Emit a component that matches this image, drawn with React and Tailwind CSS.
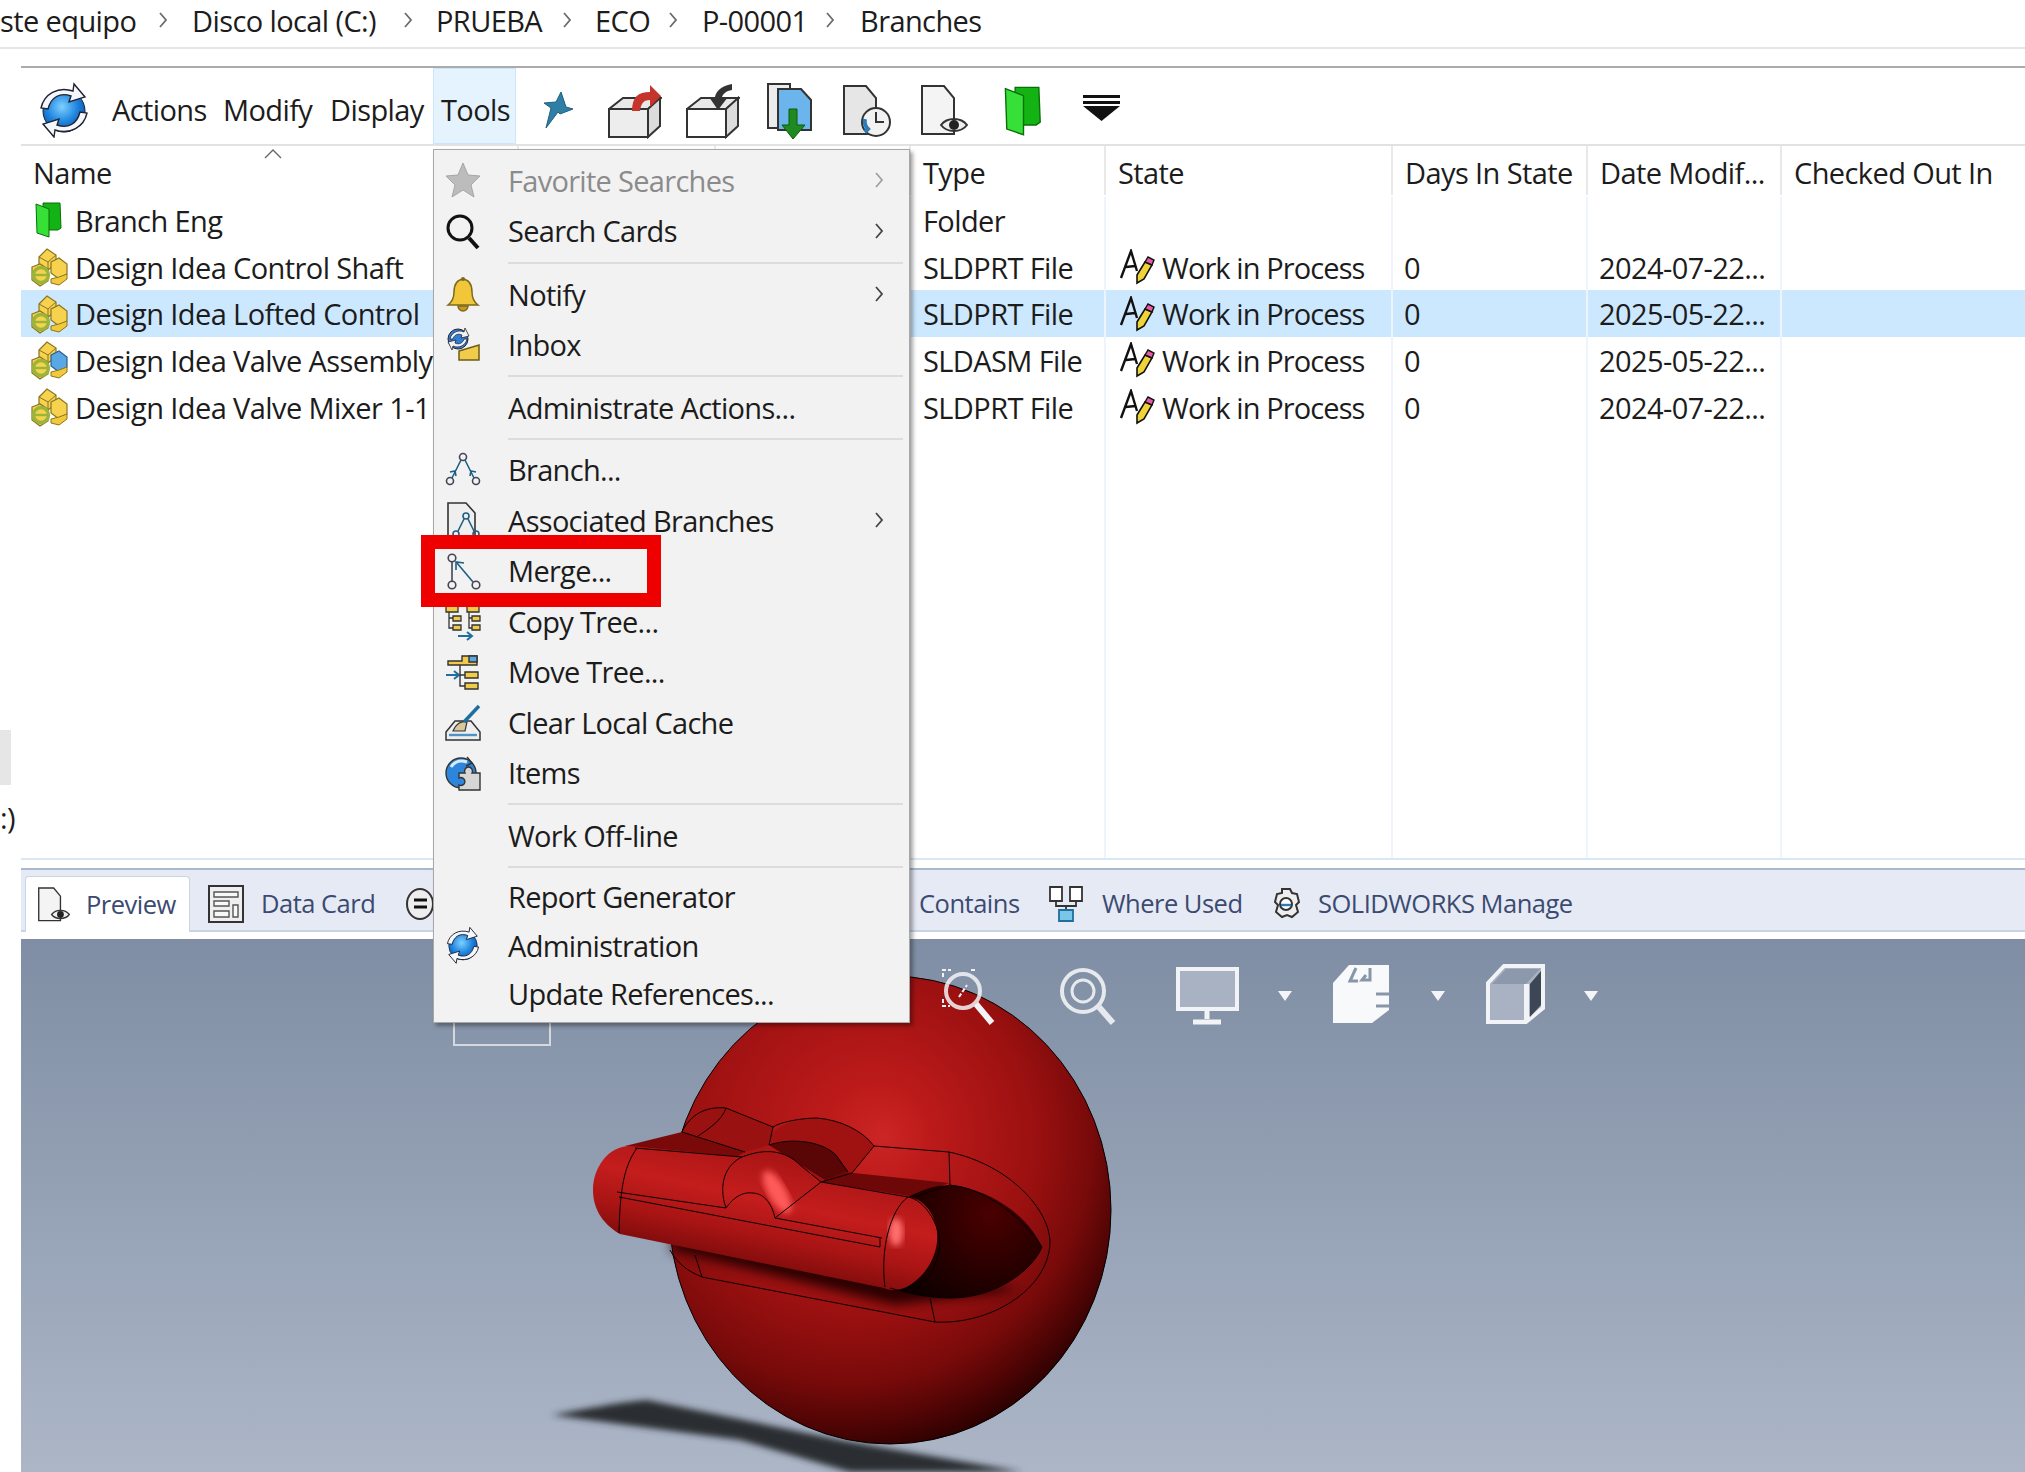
import React from "react";

// small hand drawn icons, sizes are passed in so they can be reused
function Chevron({ className = "", color = "#6b6b6b" }) {
  return (
    <svg width="10" height="18" viewBox="0 0 10 18" className={className}>
      <path d="M2 2l6 7-6 7" fill="none" stroke={color} strokeWidth="1.8" />
    </svg>
  );
}

function SyncLogo({ size = 56, id = "a" }) {
  return (
    <svg width={size} height={size} viewBox="0 0 56 56">
      <defs>
        <radialGradient id={`sync-${id}`} cx="0.45" cy="0.4" r="0.65">
          <stop offset="0" stopColor="#7fd0ff" />
          <stop offset="0.55" stopColor="#1f86e0" />
          <stop offset="1" stopColor="#0c4aa0" />
        </radialGradient>
      </defs>
      <circle cx="28" cy="29" r="21" fill={`url(#sync-${id})`} stroke="#123" strokeWidth="1" />
      <path d="M5 26C8 12 22 4 37 9l1-7 11 13-16 5 2-6C24 10 15 15 12 27z" fill="#f4f7fb" stroke="#223" strokeWidth="1.4" />
      <path d="M51 31C48 45 34 53 19 48l-1 7-11-13 16-5-2 6c11 4 20-1 23-13z" fill="#f4f7fb" stroke="#223" strokeWidth="1.4" />
    </svg>
  );
}

function PartIcon({ blue = false }) {
  return (
    <svg width="40" height="40" viewBox="0 0 40 40" className="shrink-0">
      <path d="M10 10l8-8 9 6v9l-8 6-9-6z" fill="#f6d24e" stroke="#8a7420" strokeWidth="1.2" />
      <path d="M10 10l9 5 8-7M19 15v8" fill="none" stroke="#8a7420" strokeWidth="1" />
      <path d="M22 15l8-4 8 6v10l-8 5-8-6z" fill={blue ? "#5aa7e6" : "#f6d24e"} stroke={blue ? "#2a5f90" : "#8a7420"} strokeWidth="1.2" />
      <path d="M3 20l8-3 8 5v12l-8 5-8-6z" fill="#f6d24e" stroke="#8a7420" strokeWidth="1.2" />
      <path d="M22 32l8-2 8-3v5l-8 6-8-2z" fill="#f2c93a" stroke="#8a7420" strokeWidth="1" />
      <circle cx="12" cy="28" r="7.5" fill="none" stroke="#9ab53a" strokeWidth="3.4" />
      <path d="M6 28h12" stroke="#9ab53a" strokeWidth="2.4" />
    </svg>
  );
}

function GreenFolder({ w = 28, h = 36 }) {
  return (
    <svg width={w} height={h} viewBox="0 0 28 36" className="shrink-0">
      <path d="M8 1h17l1 25-3 2H8z" fill="#12b312" stroke="#0a6e0a" strokeWidth="1" />
      <path d="M1 2l13 5v28L2 31z" fill="#37e037" stroke="#0a6e0a" strokeWidth="1" />
    </svg>
  );
}

function StateIcon() {
  return (
    <svg width="36" height="36" viewBox="0 0 36 36" className="shrink-0">
      <path d="M2 29L12 2l6 20M7 18l9-1" fill="none" stroke="#111" strokeWidth="2.4" />
      <path d="M18 26l8-13 7 3-8 14-7 4z" fill="#f0d437" stroke="#111" strokeWidth="1.6" />
      <path d="M26 13l3-5 6 3-2 5z" fill="#e85aa8" stroke="#111" strokeWidth="1.4" />
    </svg>
  );
}

function DocShape({ fill = "#f1f1f1" }) {
  return <path d="M4 3h22l10 12v36H4z" fill={fill} stroke="#333" strokeWidth="2" />;
}

function Pin() {
  return (
    <svg width="38" height="38" viewBox="0 0 38 38">
      <path d="M25 1l5 15 7 2-13 5-2-2-12 16 5-20-7-5 12-1z" fill="#2e7ea6" stroke="#1f5f82" strokeWidth="1" />
    </svg>
  );
}

function BoxArrow({ down = false }) {
  return (
    <svg width="54" height="56" viewBox="0 0 54 56">
      <path d="M1 26l14-11h38v0L40 26z" fill="#e8e8e8" stroke="#333" strokeWidth="2" />
      <path d="M1 26h39v28H1z" fill={down ? "#fff" : "#ededed"} stroke="#333" strokeWidth="2" />
      <path d="M40 26l12-11v28L40 54z" fill="#dcdcdc" stroke="#333" strokeWidth="2" />
      {down ? (
        <path d="M46 1C34 3 30 9 29 14h-6l9 13 10-13h-6c1-3 4-6 10-7z" fill="#333" />
      ) : (
        <path d="M24 28c0-14 6-19 18-19V2l11 11-11 11v-7c-6 0-9 3-10 11z" fill="#c5352b" />
      )}
    </svg>
  );
}

function DocDown() {
  return (
    <svg width="46" height="57" viewBox="0 0 46 57">
      <path d="M1 1h22v44H1z" fill="#ececec" stroke="#333" strokeWidth="2" />
      <path d="M11 6h23l10 11v30H11z" fill="#6cb4ec" stroke="#333" strokeWidth="2" />
      <path d="M22 26h8v16h8L26 56 15 42h7z" fill="#1f8a1f" stroke="#0d5a0d" strokeWidth="1" />
    </svg>
  );
}

function DocClock() {
  return (
    <svg width="52" height="56" viewBox="0 0 52 56">
      <DocShape fill="#e6e6e6" />
      <circle cx="36" cy="39" r="14" fill="#f2f2f2" stroke="#333" strokeWidth="2" />
      <path d="M36 29v10h8" fill="none" stroke="#333" strokeWidth="2" />
      <path d="M25 36a11 11 0 0 0 3 10l-3 3" fill="none" stroke="#2a7db8" strokeWidth="4" />
    </svg>
  );
}

function DocEye({ w = 53, h = 56 }) {
  return (
    <svg width={w} height={h} viewBox="0 0 53 56">
      <DocShape fill="#f4f4f4" />
      <path d="M23 42c6-8 20-8 26 0-6 8-20 8-26 0z" fill="#eee" stroke="#333" strokeWidth="2" />
      <circle cx="36" cy="42" r="5" fill="#222" />
    </svg>
  );
}

function Funnel() {
  return (
    <svg width="37" height="26" viewBox="0 0 37 26">
      <path d="M0 0h37v3H0zM0 6h37v3H0z" fill="#111" />
      <path d="M0 11h37L18.5 26z" fill="#111" />
    </svg>
  );
}

// menu icons, all on a 36 box
const menuIcons = {
  star: (
    <path d="M18 1l5 12 12 1-9 9 3 12-11-7-11 7 3-12-9-9 12-1z" fill="#bcbcbc" stroke="#a6a6a6" />
  ),
  search: (
    <g fill="none" stroke="#111">
      <circle cx="15" cy="15" r="12" strokeWidth="3" />
      <path d="M24 25l9 10" strokeWidth="4" />
    </g>
  ),
  bell: (
    <g>
      <path d="M18 3c-7 1-9 7-9 13 0 6-2 10-6 13h30c-4-3-6-7-6-13 0-6-2-12-9-13z" fill="#f2c63a" stroke="#7d6a1c" strokeWidth="1.5" />
      <path d="M13 30a5 5 0 0 0 10 0z" fill="#c79a1e" stroke="#7d6a1c" strokeWidth="1.5" />
      <circle cx="18" cy="3" r="2" fill="#7d6a1c" />
    </g>
  ),
  inbox: (
    <g>
      <path d="M14 24l20-6v15H14z" fill="#f0cc4a" stroke="#6e5c1a" strokeWidth="1.5" />
      <circle cx="13" cy="12" r="10" fill="#2d7fd6" stroke="#223" />
      <path d="M5 12c1-6 8-10 14-7l1-4 4 8-8 2 1-3c-4-2-8 0-9 4zM22 12c-1 6-8 10-14 7l-1 4-4-8 8-2-1 3c4 2 8 0 9-4z" fill="#f2f2f2" stroke="#223" strokeWidth="0.8" />
    </g>
  ),
  branch: (
    <g fill="none" stroke="#445" strokeWidth="1.6">
      <circle cx="18" cy="5" r="3.5" />
      <circle cx="5" cy="29" r="3.5" />
      <circle cx="31" cy="29" r="3.5" />
      <path d="M16 8L7 26M20 8l9 18" stroke="#1f5f82" />
      <path d="M5 20l5-1 1 5M31 20l-5-1-1 5" stroke="#1f5f82" />
    </g>
  ),
  assoc: (
    <g>
      <path d="M3 1h18l9 10v25H3z" fill="#efefef" stroke="#333" strokeWidth="1.6" />
      <g fill="none" stroke="#1f5f82" strokeWidth="1.6">
        <circle cx="21" cy="14" r="3" />
        <circle cx="11" cy="32" r="3" />
        <circle cx="31" cy="32" r="3" />
        <path d="M19 17l-6 12M23 17l6 12" />
      </g>
    </g>
  ),
  merge: (
    <g fill="none" stroke="#445" strokeWidth="1.6">
      <circle cx="7" cy="5" r="3.8" />
      <circle cx="7" cy="32" r="3.8" />
      <circle cx="31" cy="32" r="3.8" />
      <path d="M7 9v19" />
      <path d="M28 29L12 10" stroke="#1f5f82" />
      <path d="M11 17l0-8 8 1" stroke="#1f5f82" />
    </g>
  ),
  copy: (
    <g stroke="#333" strokeWidth="1.3" fill="#f0cc4a">
      <path d="M1 3h12v6H1zM8 13h8v5H8zM8 22h8v5H8zM22 3h12v6H22zM27 13h8v5h-8zM27 22h8v5h-8z" />
      <path d="M4 9v16h4M4 15h4M24 9v16h3M24 15h3" fill="none" />
      <path d="M13 33h14m-5-4l5 4-5 4" fill="none" stroke="#1f6f9e" strokeWidth="2" />
    </g>
  ),
  move: (
    <g stroke="#333" strokeWidth="1.4" fill="#f0cc4a">
      <path d="M3 7h14V2h15v9H3z" />
      <path d="M24 2h8v6h-8z" fill="#5aa7e6" />
      <path d="M20 18h13v6H20zM20 29h13v6H20z" />
      <path d="M1 21h12m-4-4l5 4-5 4" fill="none" stroke="#1f6f9e" strokeWidth="2" />
      <path d="M15 11v21h5M15 21h5" fill="none" />
    </g>
  ),
  clear: (
    <g>
      <path d="M1 28l9-11h16l9 11v8H1z" fill="#eee" stroke="#333" strokeWidth="1.5" />
      <path d="M4 31h28" stroke="#4f93c4" strokeWidth="2.4" />
      <path d="M8 27c2-6 8-11 14-9l-2 9z" fill="#d9c79a" stroke="#333" strokeWidth="1.2" />
      <path d="M19 18L34 2" stroke="#1f6f9e" strokeWidth="3.4" />
    </g>
  ),
  items: (
    <g>
      <circle cx="16" cy="18" r="15" fill="#2e86dc" stroke="#333" strokeWidth="1.4" />
      <path d="M6 12c4-6 10-7 16-5" fill="none" stroke="#d8ecff" strokeWidth="3" />
      <path d="M14 18h6a4 4 0 1 1 7 0h8v17H14v-5a4 4 0 1 0 0-7z" fill="#d6d6d6" stroke="#333" strokeWidth="1.4" />
      <path d="M22 2l5 6-6 3" fill="none" stroke="#333" strokeWidth="1.4" />
    </g>
  ),
};

function MenuIcon({ name }) {
  if (name === "admin") return <SyncLogo size={38} id="admin" />;
  return (
    <svg width="36" height="36" viewBox="0 0 36 36" overflow="visible">
      {menuIcons[name]}
    </svg>
  );
}

const menuEntries = [
  { label: "Favorite Searches", icon: "star", arrow: true, disabled: true },
  { label: "Search Cards", icon: "search", arrow: true },
  { sep: "h-[13px]" },
  { label: "Notify", icon: "bell", arrow: true },
  { label: "Inbox", icon: "inbox" },
  { sep: "h-[12px]" },
  { label: "Administrate Actions..." },
  { sep: "h-[12px]" },
  { label: "Branch...", icon: "branch" },
  { label: "Associated Branches", icon: "assoc", arrow: true },
  { label: "Merge...", icon: "merge" },
  { label: "Copy Tree...", icon: "copy" },
  { label: "Move Tree...", icon: "move" },
  { label: "Clear Local Cache", icon: "clear" },
  { label: "Items", icon: "items" },
  { sep: "h-[12px]" },
  { label: "Work Off-line" },
  { sep: "h-[12px]" },
  { label: "Report Generator", short: true },
  { label: "Administration", icon: "admin", short: true },
  { label: "Update References...", short: true },
];

const crumbs = [
  { text: "ste equipo", w: "w-[138px]", gap: "w-[54px]" },
  { text: "Disco local (C:)", w: "w-[192px]", gap: "w-[52px]" },
  { text: "PRUEBA", w: "w-[106px]", gap: "w-[53px]" },
  { text: "ECO", w: "w-[53px]", gap: "w-[54px]" },
  { text: "P-00001", w: "w-[101px]", gap: "w-[57px]" },
  { text: "Branches", w: "w-[120px]" },
];

const rows = [
  { name: "Branch Eng", icon: "folder", type: "Folder" },
  { name: "Design Idea Control Shaft", type: "SLDPRT File", date: "2024-07-22..." },
  { name: "Design Idea Lofted Control", type: "SLDPRT File", date: "2025-05-22...", selected: true },
  { name: "Design Idea Valve Assembly", type: "SLDASM File", date: "2025-05-22...", blue: true },
  { name: "Design Idea Valve Mixer 1-1", type: "SLDPRT File", date: "2024-07-22..." },
];

const gridCols = "grid grid-cols-[498px_197px_195px_195px_287px_195px_194px_1fr]";

function Crumbs() {
  return (
    <div className="flex h-[49px] items-center border-b-2 border-[#e6e6e6] pb-[7px]">
      {crumbs.map((c) => (
        <React.Fragment key={c.text}>
          <span className={`${c.w} whitespace-nowrap`}>{c.text}</span>
          {c.gap && (
            <span className={`${c.gap} flex justify-center pr-[4px]`}>
              <Chevron />
            </span>
          )}
        </React.Fragment>
      ))}
    </div>
  );
}

function Toolbar() {
  return (
    <div className="flex h-[80px] items-center border-t-[2px] border-b-[2px] border-t-[#ababab] border-b-[#e2e2e2]">
      <span className="ml-[15px] mt-[8px] flex w-[56px]">
        <SyncLogo size={56} id="top" />
      </span>
      <span className="ml-[20px] mt-[6px] w-[95px] whitespace-nowrap">Actions</span>
      <span className="ml-[16px] mt-[6px] w-[91px] whitespace-nowrap">Modify</span>
      <span className="ml-[16px] mt-[6px] w-[95px] whitespace-nowrap">Display</span>
      <span className="ml-[8px] flex h-full w-[83px] items-center border border-[#cde6fb] bg-[#e5f3ff] pl-[7px] pt-[6px]">Tools</span>
      <span className="ml-[20px] mt-[8px] flex"><Pin /></span>
      <span className="ml-[34px] mt-[9px] flex"><BoxArrow /></span>
      <span className="ml-[24px] mt-[9px] flex"><BoxArrow down /></span>
      <span className="ml-[27px] mt-[10px] flex"><DocDown /></span>
      <span className="ml-[27px] mt-[9px] flex"><DocClock /></span>
      <span className="ml-[26px] mt-[9px] flex"><DocEye /></span>
      <span className="ml-[33px] mt-[9px] flex"><GreenFolder w={39} h={54} /></span>
      <span className="ml-[40px] mt-[4px] flex"><Funnel /></span>
    </div>
  );
}

function FileTable() {
  const heads = ["Name", "", "", "Type", "State", "Days In State", "Date Modif...", "Checked Out In"];
  return (
    <div className="flex h-[714px] flex-col border-b-2 border-[#dbe7f3]">
      <div className={`${gridCols} relative h-[51px]`}>
        {heads.map((h, i) => (
          <div
            key={i}
            className={`h-[49px] whitespace-nowrap pl-[12px] pt-[12px] ${i < 7 ? "border-r-2 border-[#e9e9e9]" : ""}`}
          >
            {h}
          </div>
        ))}
        <svg width="18" height="10" viewBox="0 0 18 10" className="absolute left-[243px] top-[3px]">
          <path d="M1 9l8-8 8 8" fill="none" stroke="#666" strokeWidth="1.4" />
        </svg>
      </div>
      {rows.map((r) => (
        <div key={r.name} className={`${gridCols} h-[46.7px] items-stretch ${r.selected ? "bg-[#cce8ff]" : ""}`}>
          <div className="flex items-center gap-[6px] overflow-hidden whitespace-nowrap border-r-2 border-[#edf4fb] pl-[8px]">
            {r.icon === "folder" ? (
              <span className="flex w-[40px] justify-center"><GreenFolder /></span>
            ) : (
              <PartIcon blue={r.blue} />
            )}
            {r.name}
          </div>
          <div className="border-r-2 border-[#edf4fb]" />
          <div className="border-r-2 border-[#edf4fb]" />
          <div className="flex items-center whitespace-nowrap border-r-2 border-[#edf4fb] pl-[12px]">{r.type}</div>
          <div className="flex items-center gap-[7px] whitespace-nowrap border-r-2 border-[#edf4fb] pl-[13px] tracking-[-0.9px]">
            {r.date && <StateIcon />}
            {r.date && "Work in Process"}
          </div>
          <div className="flex items-center border-r-2 border-[#edf4fb] pl-[11px]">{r.date && "0"}</div>
          <div className="flex items-center whitespace-nowrap border-r-2 border-[#edf4fb] pl-[11px]">{r.date}</div>
          <div />
        </div>
      ))}
      <div className={`${gridCols} flex-1`}>
        {[0, 1, 2, 3, 4, 5, 6].map((i) => (
          <div key={i} className="border-r-2 border-[#edf4fb]" />
        ))}
      </div>
    </div>
  );
}

function TabStrip() {
  return (
    <div className="mt-[8px] flex h-[64px] items-end border-y-2 border-t-[#a9b9cd] border-b-[#c8d4e3] bg-[#e6eaf5] text-[25.5px] tracking-[-0.5px] text-[#3b4a70]">
      <div className="mb-[-2px] ml-[4px] flex h-[56px] w-[165px] items-center gap-[14px] rounded-t-[4px] border border-b-0 border-[#c8d5e6] bg-white pl-[10px]">
        <DocEye w={36} h={38} />
        <span>Preview</span>
      </div>
      <div className="flex h-[60px] items-center pt-[7px]">
        <svg width="36" height="38" viewBox="0 0 36 38" className="ml-[18px]">
          <rect x="1" y="1" width="34" height="36" fill="#efefef" stroke="#333" strokeWidth="2" />
          <path d="M6 7h24v5H6zM6 16h15v5H6zM6 26h15v6H6zM25 20h5v12h-5z" fill="#f8f8f8" stroke="#555" strokeWidth="1.4" />
        </svg>
        <span className="ml-[17px] w-[144px] whitespace-nowrap">Data Card</span>
        <svg width="30" height="34" viewBox="0 0 30 34">
          <ellipse cx="15" cy="17" rx="13" ry="15" fill="#eee" stroke="#333" strokeWidth="2" />
          <path d="M9 13h13M9 20h13" stroke="#111" strokeWidth="3" />
        </svg>
        <span className="ml-[484px] w-[130px] whitespace-nowrap">Contains</span>
        <svg width="34" height="36" viewBox="0 0 34 36">
          <path d="M1 1h12v14H1zM21 1h12v14H21z" fill="#fff" stroke="#333" strokeWidth="1.8" />
          <path d="M7 15v5h20v-5M17 20v4" fill="none" stroke="#333" strokeWidth="1.8" />
          <path d="M10 24h14v11H10z" fill="#79c6e8" stroke="#1f6f9e" strokeWidth="1.8" />
        </svg>
        <span className="ml-[19px] w-[170px] whitespace-nowrap">Where Used</span>
        <svg width="28" height="32" viewBox="0 0 28 32">
          <path d="M10 1h8l2 4 5 1 2 8-3 3 2 7-6 5-5-2-5 2-6-5 2-7-3-3 2-8 5-1z" fill="#eee" stroke="#333" strokeWidth="2" />
          <circle cx="14" cy="16" r="6" fill="#fff" stroke="#333" strokeWidth="2" />
          <path d="M9 17h10" stroke="#2a7db8" strokeWidth="2.4" />
        </svg>
        <span className="ml-[18px] whitespace-nowrap">SOLIDWORKS Manage</span>
      </div>
    </div>
  );
}

function HudArrow() {
  return (
    <svg width="14" height="10" viewBox="0 0 14 10">
      <path d="M0 0h14L7 10z" fill="#f4f5f8" />
    </svg>
  );
}

function HudIcons() {
  return (
    <div className="absolute left-[918px] top-[28px] flex items-center">
      <svg width="58" height="58" viewBox="0 0 58 58" className="ml-0">
        <g fill="none" stroke="#f2f3f6">
          <circle cx="24" cy="24" r="17" strokeWidth="4" opacity="0.85" />
          <path d="M37 37l16 19" strokeWidth="6" />
          <path d="M4 10V3h8M32 3h6M4 32v7h7M20 30l8-12" strokeWidth="2" strokeDasharray="4 2" />
        </g>
      </svg>
      <svg width="58" height="58" viewBox="0 0 58 58" className="ml-[62px]">
        <g fill="none" stroke="#e6e9ee">
          <circle cx="24" cy="24" r="21" strokeWidth="4" />
          <circle cx="24" cy="24" r="11" strokeWidth="3" />
          <path d="M40 40l14 16" strokeWidth="6" />
        </g>
      </svg>
      <svg width="63" height="58" viewBox="0 0 63 58" className="ml-[59px]">
        <rect x="2" y="2" width="59" height="40" fill="#a9b2c2" stroke="#f2f3f6" strokeWidth="4" />
        <path d="M31 42v10M17 55h28" stroke="#f2f3f6" strokeWidth="5" />
      </svg>
      <span className="ml-[39px] flex"><HudArrow /></span>
      <svg width="59" height="60" viewBox="0 0 59 60" className="ml-[40px] mt-[-5px]">
        <path d="M1 19L17 1h40v45L40 59H1z" fill="#f8f9fb" />
        <path d="M24 4l-6 13h8M38 4v12h-8l4-5M44 30h13M44 42h13" fill="none" stroke="#8896aa" strokeWidth="3" />
      </svg>
      <span className="ml-[40px] flex"><HudArrow /></span>
      <svg width="59" height="60" viewBox="0 0 59 60" className="ml-[41px] mt-[-5px]">
        <path d="M2 19L18 2h39v42L40 58H2z" fill="#a9b2c2" stroke="#f2f3f6" strokeWidth="4" />
        <path d="M6 20L20 5h34L40 20z" fill="#8c99ad" />
        <path d="M38 20h5v36h-5z" fill="#f2f3f6" />
        <path d="M44 20l11-13v34L44 53z" fill="#3d4654" />
      </svg>
      <span className="ml-[39px] flex"><HudArrow /></span>
    </div>
  );
}

function RedModel() {
  return (
    <svg width="620" height="472" viewBox="0 0 620 472" className="absolute left-[519px] top-[61px]" overflow="visible">
      <defs>
        <radialGradient id="ball" gradientUnits="userSpaceOnUse" cx="290" cy="140" r="360" fx="345" fy="135">
          <stop offset="0" stopColor="#cc2526" />
          <stop offset="0.15" stopColor="#bc1a1a" />
          <stop offset="0.5" stopColor="#9a1010" />
          <stop offset="0.68" stopColor="#780a0a" />
          <stop offset="0.8" stopColor="#4e0404" />
          <stop offset="0.92" stopColor="#1e0000" />
          <stop offset="1" stopColor="#0a0000" />
        </radialGradient>
        <linearGradient id="tube" gradientUnits="userSpaceOnUse" x1="230" y1="150" x2="200" y2="290">
          <stop offset="0" stopColor="#a81414" />
          <stop offset="0.35" stopColor="#c41d1d" />
          <stop offset="0.6" stopColor="#a91414" />
          <stop offset="1" stopColor="#5c0505" />
        </linearGradient>
        <radialGradient id="cone" gradientUnits="userSpaceOnUse" cx="450" cy="215" r="110">
          <stop offset="0" stopColor="#4a0000" />
          <stop offset="1" stopColor="#0a0000" />
        </radialGradient>
        <filter id="soft"><feGaussianBlur stdDeviation="3" /></filter>
        <filter id="softer"><feGaussianBlur stdDeviation="6" /></filter>
      </defs>
      <path d="M12 415C40 410 80 402 107 400L300 440L482 472L310 472L200 440Z" fill="#2a2e33" filter="url(#soft)" />
      <ellipse cx="350" cy="210" rx="221" ry="234" fill="url(#ball)" stroke="#000" strokeWidth="1" />
      <path d="M130 250L355 305L480 290L400 270L140 225Z" fill="#2c0000" filter="url(#softer)" />
      <path d="M229 137C240 122 262 118 277 118C300 120 322 130 334 146L312 173L281 182L229 145Z" fill="#a01212" />
      <path d="M229 145C250 138 280 140 296 155L308 172L285 180Z" fill="#5a0606" />
      <path d="M142 132C150 115 165 106 186 108L233 127L229 145L205 152Z" fill="#9a1111" />
      <path d="M85 146L142 132L205 152L180 165Z" fill="#7a0a0a" />
      <path d="M281 182L304 172L409 183L375 197Z" fill="#6e0808" />
      <path d="M368 197C385 188 400 183 420 186C460 195 490 220 502 247C490 275 450 298 411 298C390 298 370 294 350 288Z" fill="url(#cone)" />
      <path d="M90 146C68 146 53 168 53 190C53 212 66 226 80 234L344 288C352 292 362 290 370 285C390 272 399 250 397 232C395 212 382 198 368 197L281 182L260 165C245 150 225 150 202 157Z" fill="url(#tube)" />
      <ellipse cx="237" cy="192" rx="9" ry="24" transform="rotate(-30 237 192)" fill="#ff5a5a" filter="url(#soft)" />
      <ellipse cx="356" cy="232" rx="7" ry="14" fill="#ff7070" filter="url(#soft)" />
      <g fill="none" stroke="#0a0000" strokeWidth="1">
        <path d="M97 148C85 165 80 185 79 233" />
        <path d="M77 192L186 208" />
        <path d="M79 197L340 247" />
        <path d="M235 218L342 238" />
        <path d="M340 238V247" />
        <path d="M202 157C185 165 178 185 186 208C195 195 205 192 212 193C225 193 232 205 235 218L281 182" />
        <path d="M202 157C225 148 245 150 260 165L281 182L368 197" />
        <path d="M95 148L202 157" />
        <path d="M368 197C350 210 340 250 345 287" />
        <path d="M368 197C385 200 400 225 400 245C398 262 390 280 375 290" />
        <path d="M334 146L409 152C470 165 510 210 510 243C508 290 450 325 395 322L162 277C150 272 138 265 130 250" />
        <path d="M409 152L410 185" />
        <path d="M375 197L410 185C450 190 485 220 502 247C490 275 450 298 411 298C390 298 370 294 350 288" />
        <path d="M395 322L390 298M162 277L155 255" />
        <path d="M142 132C150 115 165 106 186 108L233 127C240 122 262 118 277 118C300 120 322 130 334 146L312 173L281 182" />
        <path d="M186 108C182 120 170 128 158 136" />
        <path d="M233 127L229 145C250 138 280 140 296 155L308 172" />
        <path d="M142 132L205 152" />
      </g>
    </svg>
  );
}

function ToolsMenu() {
  return (
    <div className="absolute left-[433px] top-[149px] z-10 h-[874px] w-[477px] border border-[#a8a8a8] bg-[#f2f2f2] pt-[5px] tracking-[-0.7px] shadow-[3px_3px_4px_rgba(0,0,0,0.35)]">
      {menuEntries.map((m, i) =>
        m.sep ? (
          <div key={i} className={`${m.sep} flex items-center pl-[74px] pr-[6px]`}>
            <div className="h-[2px] w-full bg-[#dcdcdc]" />
          </div>
        ) : (
          <div key={m.label} className={`flex items-center ${m.short ? "h-[48.5px]" : "h-[50.5px]"}`}>
            <span className="flex w-[74px] justify-center pr-[16px]">{m.icon && <MenuIcon name={m.icon} />}</span>
            <span className={`flex-1 whitespace-nowrap ${m.disabled ? "text-[#8b8b8b]" : ""}`}>{m.label}</span>
            {m.arrow && <Chevron className="mr-[25px]" color={m.disabled ? "#a0a0a0" : "#444"} />}
          </div>
        )
      )}
    </div>
  );
}

export default function App() {
  return (
    <div className="relative flex h-[1472px] w-[2025px] flex-col overflow-hidden bg-white font-['Open_Sans',sans-serif] text-[29px] leading-none tracking-[-0.6px] text-[#1c1c1c]">
      <Crumbs />
      <div className="flex flex-1">
        <div className="flex w-[21px] flex-col overflow-hidden">
          <div className="mt-[681px] h-[55px] w-[11px] bg-[#e6e6e6]" />
          <span className="mt-[18px] whitespace-nowrap">:)</span>
        </div>
        <div className="flex flex-1 flex-col pt-[17px]">
          <Toolbar />
          <FileTable />
          <TabStrip />
          <div className="mt-[7px] relative flex-1 bg-linear-to-b from-[#7f8ea4] to-[#acb6c7]">
            <div className="absolute left-[432px] top-[40px] h-[67px] w-[98px] border-2 border-[#d4d9e1]" />
            <RedModel />
            <HudIcons />
          </div>
        </div>
      </div>
      <ToolsMenu />
      {/* red highlight around Merge */}
      <div className="absolute left-[421px] top-[535px] z-20 h-[72px] w-[240px] border-[14px] border-[#ee0000]" />
    </div>
  );
}
